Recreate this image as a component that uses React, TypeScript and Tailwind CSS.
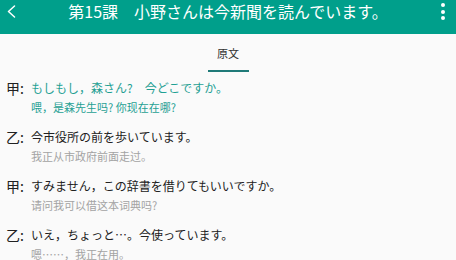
import { ReactNode } from "react";

type Line = {
  speaker: string;
  ja: string;
  zh: string;
  active?: boolean;
};

const lines: Line[] = [
  {
    speaker: "甲",
    ja: "もしもし，森さん?　今どこですか。",
    zh: "喂，是森先生吗? 你现在在哪?",
    active: true,
  },
  { speaker: "乙", ja: "今市役所の前を歩いています。", zh: "我正从市政府前面走过。" },
  {
    speaker: "甲",
    ja: "すみません，この辞書を借りてもいいですか。",
    zh: "请问我可以借这本词典吗?",
  },
  { speaker: "乙", ja: "いえ，ちょっと…。今使っています。", zh: "嗯……，我正在用。" },
];

function Header(): ReactNode {
  return (
    <div className="h-[34px] bg-[#009f8b] text-white">
      <div className="flex h-[22px] items-center">
        <div className="flex w-[26px] pl-[7px]">
          <svg width="9" height="13" viewBox="0 0 9 13" fill="none">
            <polyline
              points="7.5,1 1.5,6.5 7.5,12"
              stroke="white"
              strokeWidth="1.5"
              strokeLinecap="round"
              strokeLinejoin="round"
            />
          </svg>
        </div>
        <div className="flex-1 text-center text-[16px] leading-[22px] whitespace-nowrap">
          第15課　小野さんは今新聞を読んでいます。
        </div>
        <div className="flex w-[26px] flex-col items-center gap-[2.5px] pt-[1px]">
          <span className="h-[4px] w-[4px] rounded-full bg-white" />
          <span className="h-[4px] w-[4px] rounded-full bg-white" />
          <span className="h-[4px] w-[4px] rounded-full bg-white" />
        </div>
      </div>
    </div>
  );
}

export default function App() {
  return (
    <div className="h-[260px] w-[456px] overflow-hidden bg-[#fafafa] font-['Noto_Sans_CJK_JP',sans-serif]">
      <Header />

      <div className="flex h-[38px] items-end justify-center">
        <div className="flex w-[41px] flex-col items-center">
          <span className="text-[11px] leading-[14px] text-[#333333]">原文</span>
          <span className="mt-[10px] h-[2px] w-full bg-[#1f7a78]" />
        </div>
      </div>

      <div className="flex flex-col gap-[11px] pt-[6px]">
        {lines.map((line, i) => (
          <div key={i} className="flex">
            <div className="w-[31px] pl-[6px] text-[14px] leading-[20px] text-[#212121]">
              {line.speaker}:
            </div>
            <div className="flex flex-col">
              <span
                className={`text-[12px] leading-[20px] whitespace-nowrap ${
                  line.active ? "text-[#1fa093]" : "text-[#212121]"
                }`}
              >
                {line.ja}
              </span>
              <span
                className={`font-['Noto_Sans_CJK_SC',sans-serif] text-[11px] leading-[18px] whitespace-nowrap ${
                  line.active ? "text-[#1fa093]" : "text-[#a3a3a3]"
                }`}
              >
                {line.zh}
              </span>
            </div>
          </div>
        ))}
      </div>
    </div>
  );
}
